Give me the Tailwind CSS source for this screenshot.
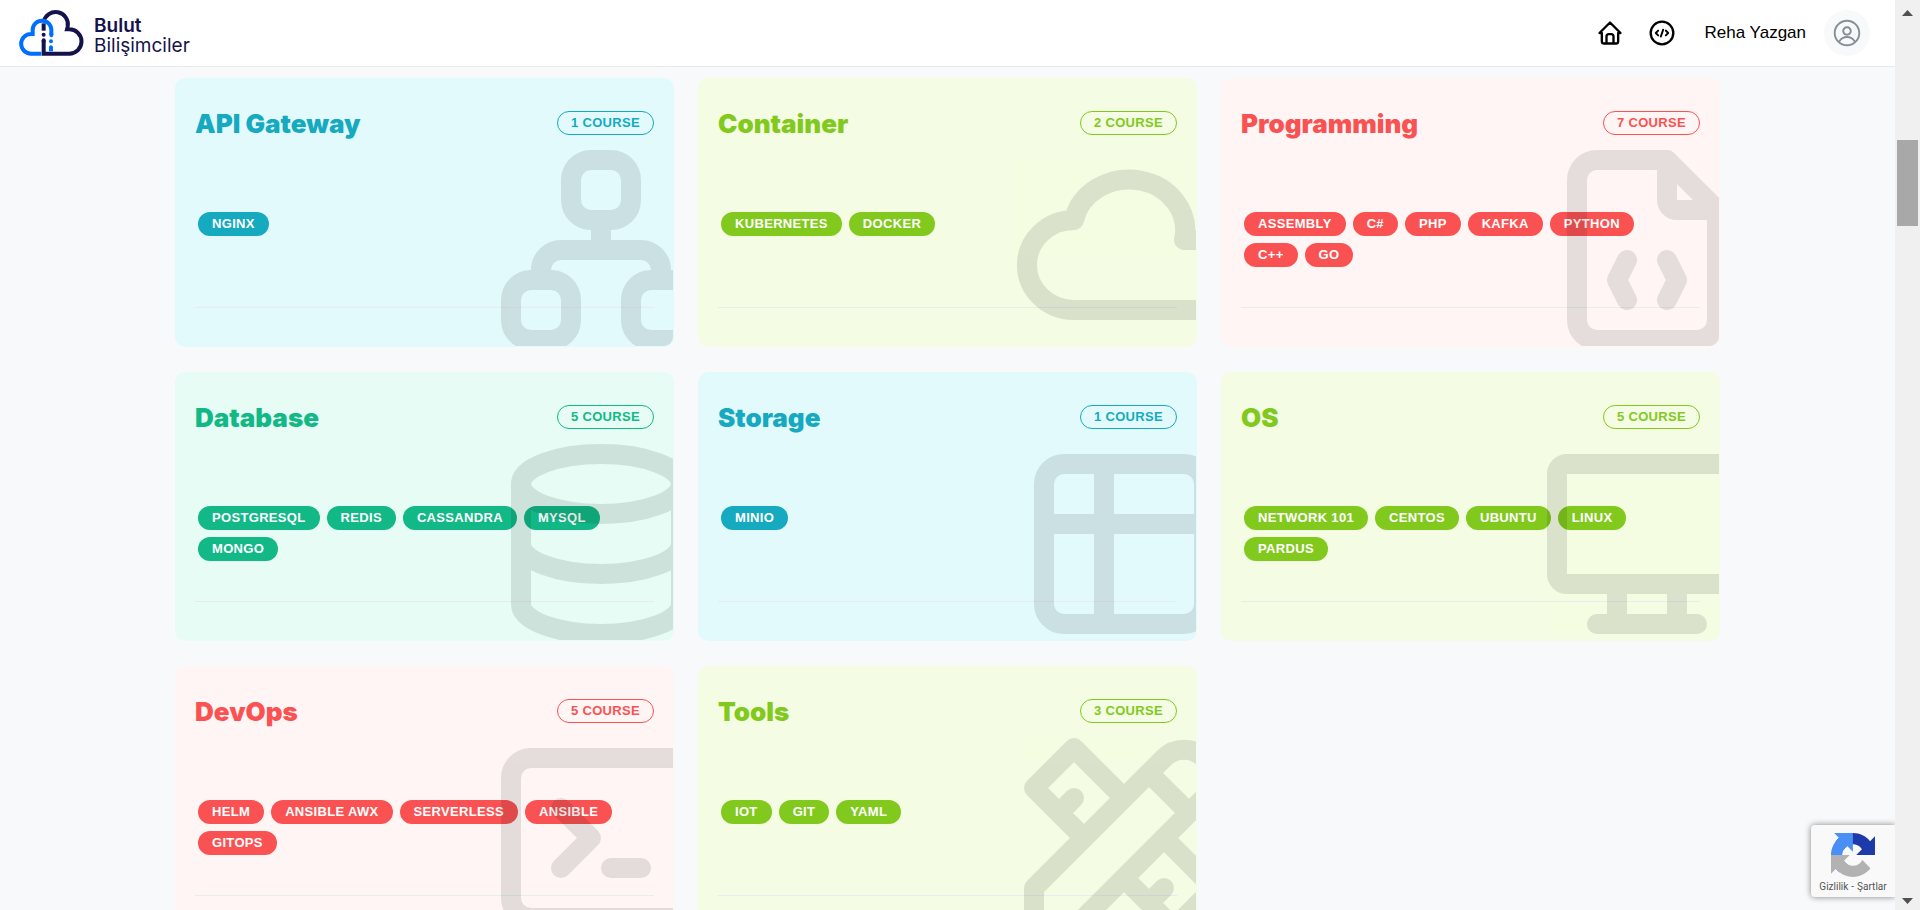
<!DOCTYPE html>
<html lang="tr">
<head>
<meta charset="utf-8">
<title>Bulut Bilişimciler</title>
<script src="https://cdn.jsdelivr.net/npm/@tailwindcss/browser@4"></script>
</head>
<body class="flex h-screen overflow-hidden bg-[#f8f9fb] font-['Liberation_Sans',Arial,sans-serif] text-black">

<div class="relative flex min-w-0 flex-1 flex-col overflow-hidden">
  <header class="flex h-[67px] shrink-0 items-center justify-between border-b border-[#e5e8ec] bg-white pr-[25px] pl-[18px]">
    <a href="#" class="flex items-center gap-[9px] font-['Inter',sans-serif] text-[19px] leading-5 text-[#15134b]" aria-label="Bulut Bilişimciler">
      <svg class="h-12 w-[67px]" viewBox="54 29 201 144" fill="none" stroke-width="12" aria-hidden="true">
        <path stroke="#15134b" d="M131 68A36.500 36.500 0 1 1 203 82L201 90H208A36.500 36.500 0 0 1 208 163H131V123"/>
        <path stroke="#15134b" stroke-linecap="round" d="M131 126V123M131 106V106.100"/>
        <path stroke="#15134b" d="M131 94V72"/>
        <path stroke="#006eff" d="M124 163H93A29.500 29.500 0 0 1 93 104H98V92A28 28 0 0 1 154 92V106"/>
        <path stroke="#006eff" stroke-linecap="round" d="M154 104V108M153 126V126.100M153 144V145"/>
        <path stroke="#006eff" d="M153 144V156"/>
      </svg>
      <span class="pt-1.5"><strong class="block font-semibold">Bulut</strong><span class="block">Bilişimciler</span></span>
    </a>
    <nav class="flex items-center">
      <a href="#" aria-label="Ana sayfa">
        <svg class="size-7" viewBox="0 0 24 24" fill="none" stroke="currentColor" stroke-width="2" stroke-linecap="round" stroke-linejoin="round"><path d="M5 12H3l9-9 9 9h-2M5 12v7a2 2 0 0 0 2 2h10a2 2 0 0 0 2-2v-7M9 21v-6a2 2 0 0 1 2-2h2a2 2 0 0 1 2 2v6"/></svg>
      </a>
      <a href="#" class="ml-6" aria-label="Kod">
        <svg class="size-7" viewBox="0 0 24 24" fill="none" stroke="currentColor" stroke-width="2" stroke-linecap="round" stroke-linejoin="round"><circle cx="12" cy="12" r="9.700"/><path stroke-width="1.700" d="M8.700 10l-2 2 2 2M15.300 10l2 2-2 2M13 9.200l-2 5.800"/></svg>
      </a>
      <span class="ml-[29px] text-[17px]">Reha Yazgan</span>
      <button class="ml-[18px] flex size-[46px] items-center justify-center rounded-full bg-[#f8f9fa] text-[#868e96]" aria-label="Profil">
        <svg class="size-[30px]" viewBox="0 0 15 15" fill="currentColor" fill-rule="evenodd"><path d="M0.877 7.500C0.877 3.842 3.842 0.877 7.500 0.877C11.158 0.877 14.123 3.842 14.123 7.500C14.123 11.158 11.158 14.123 7.500 14.123C3.842 14.123 0.877 11.158 0.877 7.500ZM7.500 1.827C4.367 1.827 1.827 4.367 1.827 7.500C1.827 8.972 2.388 10.313 3.307 11.321C4.191 9.941 5.738 9.025 7.500 9.025C9.262 9.025 10.809 9.941 11.693 11.321C12.612 10.313 13.173 8.972 13.173 7.500C13.173 4.367 10.633 1.827 7.500 1.827ZM10.982 11.979C10.284 10.780 8.986 9.975 7.500 9.975C6.015 9.975 4.716 10.780 4.018 11.979C4.980 12.727 6.188 13.173 7.500 13.173C8.812 13.173 10.021 12.727 10.982 11.979ZM5.150 6.505C5.150 5.207 6.202 4.155 7.500 4.155C8.798 4.155 9.850 5.207 9.850 6.505C9.850 7.803 8.798 8.855 7.500 8.855C6.202 8.855 5.150 7.803 5.150 6.505ZM7.500 5.105C6.727 5.105 6.100 5.732 6.100 6.505C6.100 7.278 6.727 7.905 7.500 7.905C8.273 7.905 8.900 7.278 8.900 6.505C8.900 5.732 8.273 5.105 7.500 5.105Z"/></svg>
      </button>
    </nav>
  </header>

  <main class="mx-auto grid w-full max-w-[1545px] grid-cols-3 gap-x-6 gap-y-[25px] pt-[11px]">

    <article class="relative overflow-hidden rounded-[10px] border border-transparent bg-[#e3fafc] bg-origin-border px-[19px] pt-8 pb-[38px] text-[#15aabf]">
      <div class="flex h-6 items-center justify-between">
        <h2 class="font-['Inter',sans-serif] text-[26px] font-black">API Gateway</h2>
        <span class="h-6 rounded-full border border-current px-[13px] text-[13px] leading-[22px] font-bold tracking-wide">1 COURSE</span>
      </div>
      <div class="mt-[77px] mr-6 ml-[3px] flex min-h-[95px] flex-wrap content-start gap-[7px] text-[13px] leading-6 font-bold tracking-wide text-white">
        <a href="#" class="rounded-full bg-[#15aabf] px-3.5">NGINX</a>
      </div>
      <hr class="border-[#e9ecef]">
      <svg class="pointer-events-none absolute -right-12 -bottom-6 size-60 opacity-10" viewBox="0 0 24 24" fill="none" stroke="#000" stroke-width="2" stroke-linecap="round" stroke-linejoin="round"><rect x="3" y="15" width="6" height="6" rx="2"/><rect x="15" y="15" width="6" height="6" rx="2"/><rect x="9" y="3" width="6" height="6" rx="2"/><path d="M6 15v-1a2 2 0 0 1 2-2h8a2 2 0 0 1 2 2v1M12 9v3"/></svg>
    </article>

    <article class="relative overflow-hidden rounded-[10px] border border-transparent bg-[#f4fce3] bg-origin-border px-[19px] pt-8 pb-[38px] text-[#82c91e]">
      <div class="flex h-6 items-center justify-between">
        <h2 class="font-['Inter',sans-serif] text-[26px] font-black">Container</h2>
        <span class="h-6 rounded-full border border-current px-[13px] text-[13px] leading-[22px] font-bold tracking-wide">2 COURSE</span>
      </div>
      <div class="mt-[77px] mr-6 ml-[3px] flex min-h-[95px] flex-wrap content-start gap-[7px] text-[13px] leading-6 font-bold tracking-wide text-white">
        <a href="#" class="rounded-full bg-[#82c91e] px-3.5">KUBERNETES</a>
        <a href="#" class="rounded-full bg-[#82c91e] px-3.5">DOCKER</a>
      </div>
      <hr class="border-[#e9ecef]">
      <svg class="pointer-events-none absolute -right-12 -bottom-6 size-60 opacity-10" viewBox="0 0 24 24" fill="none" stroke="#000" stroke-width="2" stroke-linecap="round" stroke-linejoin="round"><path d="M7 18a4.600 4.400 0 0 1 0-9a5 4.500 0 0 1 11 2h1a3.500 3.500 0 0 1 0 7h-12"/></svg>
    </article>

    <article class="relative overflow-hidden rounded-[10px] border border-transparent bg-[#fff5f5] bg-origin-border px-[19px] pt-8 pb-[38px] text-[#fa5252]">
      <div class="flex h-6 items-center justify-between">
        <h2 class="font-['Inter',sans-serif] text-[26px] font-black">Programming</h2>
        <span class="h-6 rounded-full border border-current px-[13px] text-[13px] leading-[22px] font-bold tracking-wide">7 COURSE</span>
      </div>
      <div class="mt-[77px] mr-6 ml-[3px] flex min-h-[95px] flex-wrap content-start gap-[7px] text-[13px] leading-6 font-bold tracking-wide text-white">
        <a href="#" class="rounded-full bg-[#fa5252] px-3.5">ASSEMBLY</a>
        <a href="#" class="rounded-full bg-[#fa5252] px-3.5">C#</a>
        <a href="#" class="rounded-full bg-[#fa5252] px-3.5">PHP</a>
        <a href="#" class="rounded-full bg-[#fa5252] px-3.5">KAFKA</a>
        <a href="#" class="rounded-full bg-[#fa5252] px-3.5">PYTHON</a>
        <a href="#" class="rounded-full bg-[#fa5252] px-3.5">C++</a>
        <a href="#" class="rounded-full bg-[#fa5252] px-3.5">GO</a>
      </div>
      <hr class="border-[#e9ecef]">
      <svg class="pointer-events-none absolute -right-12 -bottom-6 size-60 opacity-10" viewBox="0 0 24 24" fill="none" stroke="#000" stroke-width="2" stroke-linecap="round" stroke-linejoin="round"><path d="M14 3v4a1 1 0 0 0 1 1h4"/><path d="M17 21H7a2 2 0 0 1-2-2V5a2 2 0 0 1 2-2h7l5 5v11a2 2 0 0 1-2 2zM10 13l-1 2 1 2M14 13l1 2-1 2"/></svg>
    </article>

    <article class="relative overflow-hidden rounded-[10px] border border-transparent bg-[#e6fcf5] bg-origin-border px-[19px] pt-8 pb-[38px] text-[#12b886]">
      <div class="flex h-6 items-center justify-between">
        <h2 class="font-['Inter',sans-serif] text-[26px] font-black">Database</h2>
        <span class="h-6 rounded-full border border-current px-[13px] text-[13px] leading-[22px] font-bold tracking-wide">5 COURSE</span>
      </div>
      <div class="mt-[77px] mr-6 ml-[3px] flex min-h-[95px] flex-wrap content-start gap-[7px] text-[13px] leading-6 font-bold tracking-wide text-white">
        <a href="#" class="rounded-full bg-[#12b886] px-3.5">POSTGRESQL</a>
        <a href="#" class="rounded-full bg-[#12b886] px-3.5">REDIS</a>
        <a href="#" class="rounded-full bg-[#12b886] px-3.5">CASSANDRA</a>
        <a href="#" class="rounded-full bg-[#12b886] px-3.5">MYSQL</a>
        <a href="#" class="rounded-full bg-[#12b886] px-3.5">MONGO</a>
      </div>
      <hr class="border-[#e9ecef]">
      <svg class="pointer-events-none absolute -right-12 -bottom-6 size-60 opacity-10" viewBox="0 0 24 24" fill="none" stroke="#000" stroke-width="2" stroke-linecap="round" stroke-linejoin="round"><ellipse cx="12" cy="6" rx="8" ry="3"/><path d="M4 6v6a8 3 0 0 0 16 0V6"/><path d="M4 12v6a8 3 0 0 0 16 0v-6"/></svg>
    </article>

    <article class="relative overflow-hidden rounded-[10px] border border-transparent bg-[#e3fafc] bg-origin-border px-[19px] pt-8 pb-[38px] text-[#15aabf]">
      <div class="flex h-6 items-center justify-between">
        <h2 class="font-['Inter',sans-serif] text-[26px] font-black">Storage</h2>
        <span class="h-6 rounded-full border border-current px-[13px] text-[13px] leading-[22px] font-bold tracking-wide">1 COURSE</span>
      </div>
      <div class="mt-[77px] mr-6 ml-[3px] flex min-h-[95px] flex-wrap content-start gap-[7px] text-[13px] leading-6 font-bold tracking-wide text-white">
        <a href="#" class="rounded-full bg-[#15aabf] px-3.5">MINIO</a>
      </div>
      <hr class="border-[#e9ecef]">
      <svg class="pointer-events-none absolute -right-12 -bottom-6 size-60 opacity-10" viewBox="0 0 24 24" fill="none" stroke="#000" stroke-width="2" stroke-linecap="round" stroke-linejoin="round"><rect x="4" y="4" width="16" height="16" rx="2"/><path d="M4 10h16M10 4v16"/></svg>
    </article>

    <article class="relative overflow-hidden rounded-[10px] border border-transparent bg-[#f4fce3] bg-origin-border px-[19px] pt-8 pb-[38px] text-[#82c91e]">
      <div class="flex h-6 items-center justify-between">
        <h2 class="font-['Inter',sans-serif] text-[26px] font-black">OS</h2>
        <span class="h-6 rounded-full border border-current px-[13px] text-[13px] leading-[22px] font-bold tracking-wide">5 COURSE</span>
      </div>
      <div class="mt-[77px] mr-6 ml-[3px] flex min-h-[95px] flex-wrap content-start gap-[7px] text-[13px] leading-6 font-bold tracking-wide text-white">
        <a href="#" class="rounded-full bg-[#82c91e] px-3.5">NETWORK 101</a>
        <a href="#" class="rounded-full bg-[#82c91e] px-3.5">CENTOS</a>
        <a href="#" class="rounded-full bg-[#82c91e] px-3.5">UBUNTU</a>
        <a href="#" class="rounded-full bg-[#82c91e] px-3.5">LINUX</a>
        <a href="#" class="rounded-full bg-[#82c91e] px-3.5">PARDUS</a>
      </div>
      <hr class="border-[#e9ecef]">
      <svg class="pointer-events-none absolute -right-12 -bottom-6 size-60 opacity-10" viewBox="0 0 24 24" fill="none" stroke="#000" stroke-width="2" stroke-linecap="round" stroke-linejoin="round"><rect x="3" y="4" width="18" height="12" rx="1"/><path d="M7 20h10M9 16v4M15 16v4"/></svg>
    </article>

    <article class="relative overflow-hidden rounded-[10px] border border-transparent bg-[#fff5f5] bg-origin-border px-[19px] pt-8 pb-[38px] text-[#fa5252]">
      <div class="flex h-6 items-center justify-between">
        <h2 class="font-['Inter',sans-serif] text-[26px] font-black">DevOps</h2>
        <span class="h-6 rounded-full border border-current px-[13px] text-[13px] leading-[22px] font-bold tracking-wide">5 COURSE</span>
      </div>
      <div class="mt-[77px] mr-6 ml-[3px] flex min-h-[95px] flex-wrap content-start gap-[7px] text-[13px] leading-6 font-bold tracking-wide text-white">
        <a href="#" class="rounded-full bg-[#fa5252] px-3.5">HELM</a>
        <a href="#" class="rounded-full bg-[#fa5252] px-3.5">ANSIBLE AWX</a>
        <a href="#" class="rounded-full bg-[#fa5252] px-3.5">SERVERLESS</a>
        <a href="#" class="rounded-full bg-[#fa5252] px-3.5">ANSIBLE</a>
        <a href="#" class="rounded-full bg-[#fa5252] px-3.5">GITOPS</a>
      </div>
      <hr class="border-[#e9ecef]">
      <svg class="pointer-events-none absolute -right-12 -bottom-6 size-60 opacity-10" viewBox="0 0 24 24" fill="none" stroke="#000" stroke-width="2" stroke-linecap="round" stroke-linejoin="round"><path d="M8 9l3 3-3 3M13 15h3"/><rect x="3" y="4" width="18" height="16" rx="2"/></svg>
    </article>

    <article class="relative overflow-hidden rounded-[10px] border border-transparent bg-[#f4fce3] bg-origin-border px-[19px] pt-8 pb-[38px] text-[#82c91e]">
      <div class="flex h-6 items-center justify-between">
        <h2 class="font-['Inter',sans-serif] text-[26px] font-black">Tools</h2>
        <span class="h-6 rounded-full border border-current px-[13px] text-[13px] leading-[22px] font-bold tracking-wide">3 COURSE</span>
      </div>
      <div class="mt-[77px] mr-6 ml-[3px] flex min-h-[95px] flex-wrap content-start gap-[7px] text-[13px] leading-6 font-bold tracking-wide text-white">
        <a href="#" class="rounded-full bg-[#82c91e] px-3.5">IOT</a>
        <a href="#" class="rounded-full bg-[#82c91e] px-3.5">GIT</a>
        <a href="#" class="rounded-full bg-[#82c91e] px-3.5">YAML</a>
      </div>
      <hr class="border-[#e9ecef]">
      <svg class="pointer-events-none absolute -right-12 -bottom-6 size-60 opacity-10" viewBox="0 0 24 24" fill="none" stroke="#000" stroke-width="2" stroke-linecap="round" stroke-linejoin="round"><path d="M3 21h4L20 8a1.500 1.500 0 0 0-4-4L3 17v4M14.500 5.500l4 4M12 8L7 3 3 7l5 5M7 8L5.500 9.500M16 12l5 5-4 4-5-5M16 17l-1.500 1.500"/></svg>
    </article>
  </main>

  <!-- reCAPTCHA badge pinned to the lower right corner -->
  <aside class="absolute right-0 bottom-[13px] flex h-[72px] w-[84px] flex-col items-center rounded-l-sm bg-[#f9f9f9] pt-2 shadow-[0_0_6px_#808080]">
    <svg class="size-11" viewBox="0 0 64 64" aria-hidden="true">
      <path fill="#1c3aa9" d="M64 31.955l-.033-1.370V4.687l-7.160 7.160C50.948 4.674 42.033.093 32.050.093c-10.400 0-19.622 4.960-25.458 12.640l11.736 11.860a15.550 15.550 0 0 1 4.754-5.334c2.050-1.600 4.952-2.906 8.968-2.906.485 0 .860.057 1.135.163 4.976.393 9.288 3.140 11.828 7.124l-8.307 8.307L64 31.953"/>
      <path fill="#4a8ff5" d="M31.862.094l-1.370.033H4.594l7.160 7.160C4.580 13.147 0 22.060 0 32.046c0 10.400 4.960 19.622 12.640 25.458L24.500 45.768a15.550 15.550 0 0 1-5.334-4.754c-1.600-2.050-2.906-4.952-2.906-8.968 0-.485.057-.860.163-1.135.393-4.976 3.140-9.288 7.124-11.828l8.307 8.307L31.860.095"/>
      <path fill="#b2b2b2" d="M.001 32.045l.033 1.370v25.898l7.160-7.160c5.860 7.173 14.774 11.754 24.760 11.754 10.400 0 19.622-4.960 25.458-12.640l-11.736-11.860a15.550 15.550 0 0 1-4.754 5.334c-2.050 1.600-4.952 2.906-8.968 2.906-.485 0-.860-.057-1.135-.163-4.976-.393-9.288-3.140-11.828-7.124l8.307-8.307c-10.522.040-22.400.066-27.295-.005"/>
    </svg>
    <div class="mt-1 flex gap-[3px] font-['Roboto',sans-serif] text-[10px] leading-3 text-[#555]">
      <a href="#">Gizlilik</a><span>-</span><a href="#">Şartlar</a>
    </div>
  </aside>
</div>

<!-- Scroll track -->
<div class="flex w-[25px] shrink-0 flex-col items-center bg-[#f0f0f0]" aria-hidden="true">
  <svg class="mt-2.5 h-1.5 w-[11px]" viewBox="0 0 11 6" fill="#505050"><path d="M0 6L5.500 0 11 6z"/></svg>
  <div class="mt-[124px] h-[86px] w-[21px] bg-[#a8a8a8]"></div>
  <svg class="mt-auto mb-1.5 h-1.5 w-[11px]" viewBox="0 0 11 6" fill="#505050"><path d="M0 0L5.500 6 11 0z"/></svg>
</div>
</body>
</html>
